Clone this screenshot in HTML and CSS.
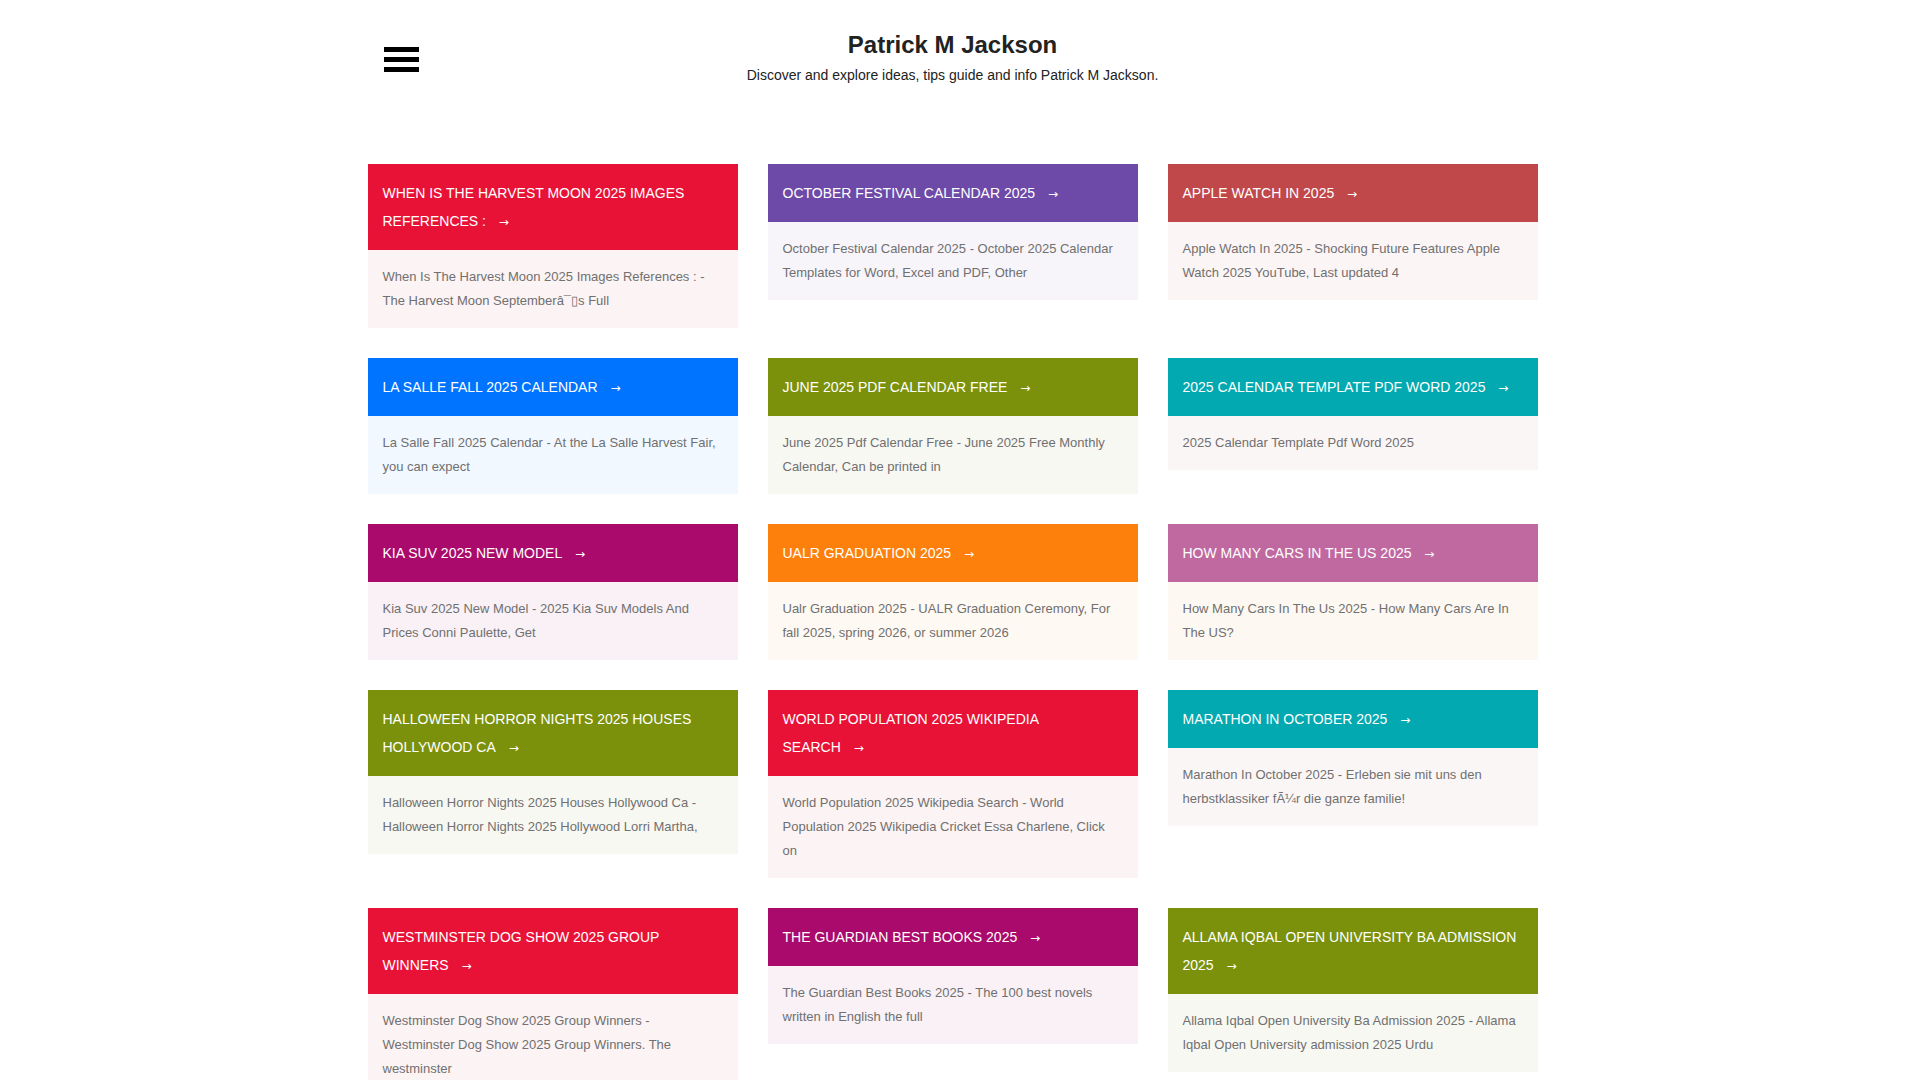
FILE: index.html
```html
<!DOCTYPE html>
<html lang="en">
<head>
  <meta charset="UTF-8" />
  <title>Patrick M Jackson</title>
  <link rel="stylesheet" href="styles.css">
</head>
<body>
  <header class="site-header container">
    <button class="menu-toggle" aria-label="Menu"><span></span><span></span><span></span></button>
    <div class="brand">
      <h1>Patrick M Jackson</h1>
      <p>Discover and explore ideas, tips guide and info Patrick M Jackson.</p>
    </div>
  </header>

  <main class="container">
    <div class="post-grid">
      <!-- row 1 -->
      <article class="post red">
        <a class="post-title" href="#">WHEN IS THE HARVEST MOON 2025 IMAGES REFERENCES :<span class="arrow">&nbsp;→</span></a>
        <p class="post-text">When Is The Harvest Moon 2025 Images References : - The Harvest Moon Septemberâ¯▯s Full</p>
      </article>
      <article class="post purple">
        <a class="post-title" href="#">OCTOBER FESTIVAL CALENDAR 2025<span class="arrow">&nbsp;→</span></a>
        <p class="post-text">October Festival Calendar 2025 - October 2025 Calendar Templates for Word, Excel and PDF, Other</p>
      </article>
      <article class="post brick">
        <a class="post-title" href="#">APPLE WATCH IN 2025<span class="arrow">&nbsp;→</span></a>
        <p class="post-text">Apple Watch In 2025 - Shocking Future Features Apple Watch 2025 YouTube, Last updated 4</p>
      </article>

      <!-- row 2 -->
      <article class="post blue">
        <a class="post-title" href="#">LA SALLE FALL 2025 CALENDAR<span class="arrow">&nbsp;→</span></a>
        <p class="post-text">La Salle Fall 2025 Calendar - At the La Salle Harvest Fair, you can expect</p>
      </article>
      <article class="post olive">
        <a class="post-title" href="#">JUNE 2025 PDF CALENDAR FREE<span class="arrow">&nbsp;→</span></a>
        <p class="post-text">June 2025 Pdf Calendar Free - June 2025 Free Monthly Calendar, Can be printed in</p>
      </article>
      <article class="post teal">
        <a class="post-title" href="#">2025 CALENDAR TEMPLATE PDF WORD 2025<span class="arrow">&nbsp;→</span></a>
        <p class="post-text">2025 Calendar Template Pdf Word 2025</p>
      </article>

      <!-- row 3 -->
      <article class="post magenta">
        <a class="post-title" href="#">KIA SUV 2025 NEW MODEL<span class="arrow">&nbsp;→</span></a>
        <p class="post-text">Kia Suv 2025 New Model - 2025 Kia Suv Models And Prices Conni Paulette, Get</p>
      </article>
      <article class="post orange">
        <a class="post-title" href="#">UALR GRADUATION 2025<span class="arrow">&nbsp;→</span></a>
        <p class="post-text">Ualr Graduation 2025 - UALR Graduation Ceremony, For fall 2025, spring 2026, or summer 2026</p>
      </article>
      <article class="post pink">
        <a class="post-title" href="#">HOW MANY CARS IN THE US 2025<span class="arrow">&nbsp;→</span></a>
        <p class="post-text">How Many Cars In The Us 2025 - How Many Cars Are In The US?</p>
      </article>

      <!-- row 4 -->
      <article class="post olive">
        <a class="post-title" href="#">HALLOWEEN HORROR NIGHTS 2025 HOUSES HOLLYWOOD CA<span class="arrow">&nbsp;→</span></a>
        <p class="post-text">Halloween Horror Nights 2025 Houses Hollywood Ca - Halloween Horror Nights 2025 Hollywood Lorri Martha,</p>
      </article>
      <article class="post red">
        <a class="post-title" href="#">WORLD POPULATION 2025 WIKIPEDIA SEARCH<span class="arrow">&nbsp;→</span></a>
        <p class="post-text">World Population 2025 Wikipedia Search - World Population 2025 Wikipedia Cricket Essa Charlene, Click on</p>
      </article>
      <article class="post teal">
        <a class="post-title" href="#">MARATHON IN OCTOBER 2025<span class="arrow">&nbsp;→</span></a>
        <p class="post-text">Marathon In October 2025 - Erleben sie mit uns den herbstklassiker fÃ¼r die ganze familie!</p>
      </article>

      <!-- row 5 -->
      <article class="post red">
        <a class="post-title" href="#">WESTMINSTER DOG SHOW 2025 GROUP WINNERS<span class="arrow">&nbsp;→</span></a>
        <p class="post-text">Westminster Dog Show 2025 Group Winners - Westminster Dog Show 2025 Group Winners. The westminster</p>
      </article>
      <article class="post magenta">
        <a class="post-title" href="#">THE GUARDIAN BEST BOOKS 2025<span class="arrow">&nbsp;→</span></a>
        <p class="post-text">The Guardian Best Books 2025 - The 100 best novels written in English the full</p>
      </article>
      <article class="post olive">
        <a class="post-title" href="#">ALLAMA IQBAL OPEN UNIVERSITY BA ADMISSION 2025<span class="arrow">&nbsp;→</span></a>
        <p class="post-text">Allama Iqbal Open University Ba Admission 2025 - Allama Iqbal Open University admission 2025 Urdu</p>
      </article>
    </div>
  </main>
</body>
</html>
```

FILE: styles.css
```css
body {
  font-family: "Liberation Sans", Arial, sans-serif;
  background-color: #fff;
  color: #222;
  margin: 0;
  padding: 0 15px 0 0; /* room the scrollbar takes in the original */
}
.container {
  width: 1170px;
  margin: 0 auto;
}

/* header */
.site-header {
  display: grid;
  grid-template-columns: 1fr auto 1fr;
  padding-top: 30px;
}
.menu-toggle {
  align-self: start;
  justify-self: start;
  display: flex;
  flex-direction: column;
  gap: 5px;
  width: 35px;
  margin: 17px 0 0 16px;
  padding: 0;
  border: 0;
  background: none;
  cursor: pointer;
}
.menu-toggle span {
  display: block;
  height: 5px;
  background-color: #000;
}
.brand {
  text-align: center;
}
.brand h1 {
  margin: 0;
  font-size: 24px;
  line-height: 30px;
  font-weight: bold;
  color: #222;
}
.brand p {
  margin: 5px 0 0;
  font-size: 14px;
  line-height: 20px;
  color: #222;
}

/* posts */
.post-grid {
  display: grid;
  grid-template-columns: repeat(3, 370px);
  column-gap: 30px;
  row-gap: 30px;
  align-items: start;
  margin-top: 79px;
  padding-bottom: 40px;
}
.post-title {
  display: block;
  padding: 15px;
  font-size: 14px;
  line-height: 28px;
  color: #fff;
  text-decoration: none;
}
.post-title .arrow {
  padding-left: 9px;
  font-family: "DejaVu Sans", sans-serif;
  font-size: 12px;
  line-height: 1;
}
.post-text {
  margin: 0;
  padding: 15px;
  font-size: 13px;
  line-height: 24px;
  color: #707070;
}

.red .post-title { background-color: #e81236; }
.red .post-text { background-color: #fcf3f4; }
.purple .post-title { background-color: #6e4aa8; }
.purple .post-text { background-color: #f7f5fa; }
.brick .post-title { background-color: #c0474a; }
.brick .post-text { background-color: #fcf5f5; }
.blue .post-title { background-color: #0073ff; }
.blue .post-text { background-color: #f2f8ff; }
.olive .post-title { background-color: #7b910c; }
.olive .post-text { background-color: #f8f8f3; }
.teal .post-title { background-color: #02a9b0; }
.teal .post-text { background-color: #fbf6f6; }
.magenta .post-title { background-color: #aa0a6b; }
.magenta .post-text { background-color: #f9f1f6; }
.orange .post-title { background-color: #fe800c; }
.orange .post-text { background-color: #fff9f3; }
.pink .post-title { background-color: #bf69a0; }
.pink .post-text { background-color: #fef8f2; }
```
